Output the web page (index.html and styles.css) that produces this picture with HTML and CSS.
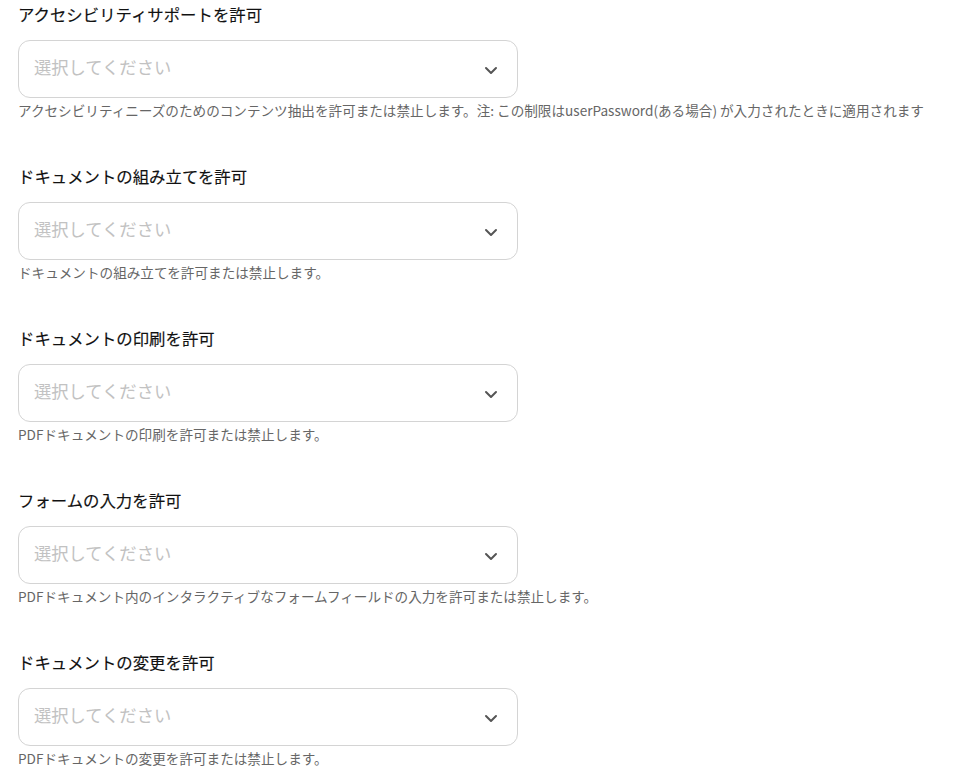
FILE: index.html
```html
<!DOCTYPE html>
<html lang="ja">
<head>
<meta charset="utf-8">
<link rel="stylesheet" href="styles.css">
</head>
<body>
<div class="form">
  <div class="field">
    <div class="label">アクセシビリティサポートを許可</div>
    <div class="select"><span class="placeholder">選択してください</span><svg class="chev" width="14" height="9" viewBox="0 0 14 9"><path d="M2 2 L7 7 L12 2" fill="none" stroke="#555" stroke-width="2" stroke-linecap="round" stroke-linejoin="round"/></svg></div>
    <div class="help">アクセシビリティニーズのためのコンテンツ抽出を許可または禁止します。注: この制限はuserPassword(ある場合) が入力されたときに適用されます</div>
  </div>
  <div class="field">
    <div class="label">ドキュメントの組み立てを許可</div>
    <div class="select"><span class="placeholder">選択してください</span><svg class="chev" width="14" height="9" viewBox="0 0 14 9"><path d="M2 2 L7 7 L12 2" fill="none" stroke="#555" stroke-width="2" stroke-linecap="round" stroke-linejoin="round"/></svg></div>
    <div class="help">ドキュメントの組み立てを許可または禁止します。</div>
  </div>
  <div class="field">
    <div class="label">ドキュメントの印刷を許可</div>
    <div class="select"><span class="placeholder">選択してください</span><svg class="chev" width="14" height="9" viewBox="0 0 14 9"><path d="M2 2 L7 7 L12 2" fill="none" stroke="#555" stroke-width="2" stroke-linecap="round" stroke-linejoin="round"/></svg></div>
    <div class="help">PDFドキュメントの印刷を許可または禁止します。</div>
  </div>
  <div class="field">
    <div class="label">フォームの入力を許可</div>
    <div class="select"><span class="placeholder">選択してください</span><svg class="chev" width="14" height="9" viewBox="0 0 14 9"><path d="M2 2 L7 7 L12 2" fill="none" stroke="#555" stroke-width="2" stroke-linecap="round" stroke-linejoin="round"/></svg></div>
    <div class="help">PDFドキュメント内のインタラクティブなフォームフィールドの入力を許可または禁止します。</div>
  </div>
  <div class="field">
    <div class="label">ドキュメントの変更を許可</div>
    <div class="select"><span class="placeholder">選択してください</span><svg class="chev" width="14" height="9" viewBox="0 0 14 9"><path d="M2 2 L7 7 L12 2" fill="none" stroke="#555" stroke-width="2" stroke-linecap="round" stroke-linejoin="round"/></svg></div>
    <div class="help">PDFドキュメントの変更を許可または禁止します。</div>
  </div>
</div>
</body>
</html>
```
FILE: styles.css
```css
html, body {
  margin: 0;
  padding: 0;
  background: #fff;
}
body {
  font-family: "Noto Sans CJK JP", "Noto Sans", sans-serif;
  color: #222;
}
.form {
  padding: 4px 18px 0 18px;
  display: flex;
  flex-direction: column;
  gap: 46px;
}
.field {
  display: flex;
  flex-direction: column;
}
.label {
  font-family: "Noto Sans CJK JP", sans-serif;
  font-size: 16.4px;
  font-weight: 400;
  line-height: 20px;
  color: #111;
  margin-bottom: 16px;
  -webkit-text-stroke: 0.15px #111;
}
.select {
  width: 500px;
  height: 58px;
  box-sizing: border-box;
  border: 1px solid #d4d4d4;
  border-radius: 12px;
  display: flex;
  align-items: center;
  justify-content: space-between;
  padding: 0 19px 0 15px;
}
.placeholder {
  font-size: 17.3px;
  color: #c2c2c2;
  line-height: 24px;
  margin-top: -4px;
}
.chev {
  display: block;
  margin-top: 2px;
}
.help {
  font-size: 13.6px;
  line-height: 20px;
  color: #666;
  margin-top: 2px;
}
```
